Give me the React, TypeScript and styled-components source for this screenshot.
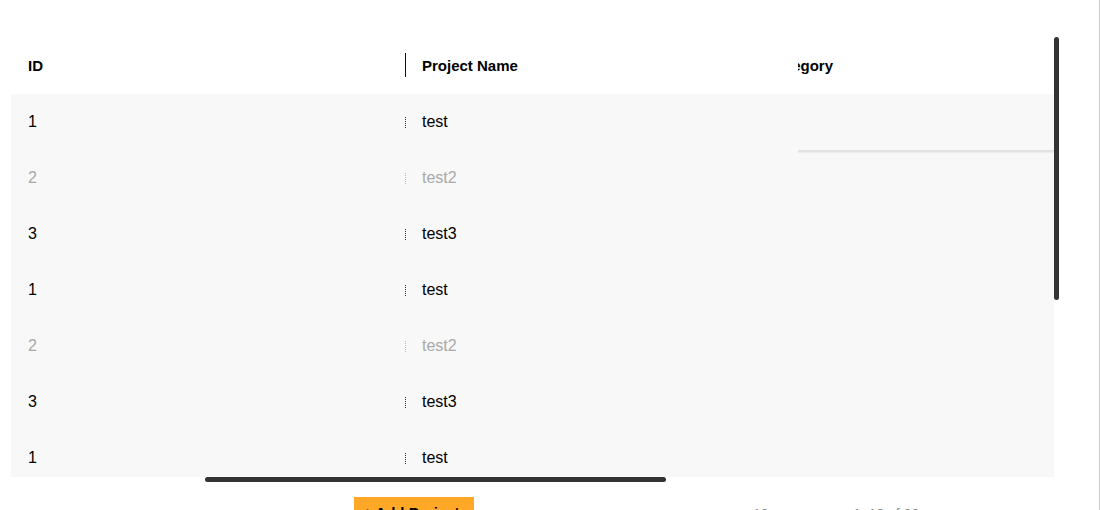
import styled, { createGlobalStyle } from 'styled-components'

type Project = { id: number; name: string; disabled?: boolean }

const ROWS: Project[] = [
  { id: 1, name: 'test' },
  { id: 2, name: 'test2', disabled: true },
  { id: 3, name: 'test3' },
  { id: 1, name: 'test' },
  { id: 2, name: 'test2', disabled: true },
  { id: 3, name: 'test3' },
  { id: 1, name: 'test' },
]

export default function App(): JSX.Element {
  return (
    <>
      <GlobalStyle />
      <Page>
        <GridFrame>
          <HeaderRow>
            <HeadCell>ID</HeadCell>
            <HeadCell $divider>Project Name</HeadCell>
            <ClippedHead>
              <span>Category</span>
            </ClippedHead>
          </HeaderRow>
          <Body>
            {ROWS.map((row, i) => (
              <Row key={i} $muted={row.disabled}>
                <Cell>{row.id}</Cell>
                <Cell $handle>{row.name}</Cell>
                <Cell $underline={i === 0} />
              </Row>
            ))}
          </Body>
          <VThumb />
          <HThumb />
        </GridFrame>
        <Footer>
          <AddButton>+ Add Project</AddButton>
          <Pager>
            <PerPage>10</PerPage>
            <Range>1–10 of 20</Range>
            <Arrow>‹</Arrow>
            <Arrow>›</Arrow>
          </Pager>
        </Footer>
      </Page>
    </>
  )
}

const GlobalStyle = createGlobalStyle`
  html, body {
    margin: 0;
    background: #fff;
    font-family: "Liberation Sans", Arial, sans-serif;
  }
`

const Page = styled.div`
  width: 1100px;
  height: 510px;
  box-sizing: border-box;
  padding: 37px 0 0 11px;
  border-right: 1px solid #c9c9c9;
  background: #fff;
  overflow: hidden;
`

const GridFrame = styled.div`
  position: relative;
  width: 1048px;
  height: 445px;
  padding-top: 1px;
  box-sizing: border-box;
  overflow: hidden;
  background: #fff;
`

const columns = '394px 393px 256px'

const HeaderRow = styled.div`
  display: grid;
  grid-template-columns: ${columns};
  height: 56px;
  padding-bottom: 2px;
  box-sizing: border-box;
  background: #fff;
`

const HeadCell = styled.div<{ $divider?: boolean }>`
  position: relative;
  display: flex;
  align-items: center;
  padding-left: 17px;
  font-size: 15px;
  font-weight: 700;
  color: #000;

  ${({ $divider }) =>
    $divider &&
    `
    &::before {
      content: '';
      position: absolute;
      left: 0;
      top: 15px;
      height: 24px;
      width: 1px;
      background: #111;
    }
  `}
`

const ClippedHead = styled.div`
  display: flex;
  align-items: center;
  overflow: hidden;
  font-size: 15px;
  font-weight: 700;
  color: #000;

  span {
    margin-left: -30px;
    white-space: nowrap;
  }
`

const Body = styled.div`
  width: 1043px;
  height: 383px;
  overflow: hidden;
  background: #f8f8f8;
`

const Row = styled.div<{ $muted?: boolean }>`
  display: grid;
  grid-template-columns: ${columns};
  height: 56px;
  font-size: 16px;
  color: ${({ $muted }) => ($muted ? '#a9a9a9' : '#000')};
`

const Cell = styled.div<{ $handle?: boolean; $underline?: boolean }>`
  position: relative;
  display: flex;
  align-items: center;
  padding-left: 17px;

  ${({ $handle }) =>
    $handle &&
    `
    &::before {
      content: '';
      position: absolute;
      left: 0;
      top: 23px;
      height: 11px;
      border-left: 1px dotted currentColor;
      opacity: 0.8;
    }
  `}

  ${({ $underline }) =>
    $underline &&
    `
    &::after {
      content: '';
      position: absolute;
      left: 0;
      right: 0;
      bottom: -2px;
      height: 2px;
      background: #e2e2e2;
      box-shadow: 0 1px 1px #ececec;
    }
  `}
`

const VThumb = styled.div`
  position: absolute;
  right: 0;
  top: 0;
  width: 5px;
  height: 263px;
  border-radius: 3px;
  background: #333;
`

const HThumb = styled.div`
  position: absolute;
  left: 194px;
  bottom: 0;
  width: 461px;
  height: 5px;
  border-radius: 3px;
  background: #333;
`

const Footer = styled.div`
  display: flex;
  align-items: flex-start;
  padding-top: 15px;
`

const AddButton = styled.button`
  flex-shrink: 0;
  margin-left: 343px;
  width: 120px;
  height: 32px;
  padding: 0 0 0 9px;
  border: none;
  background: #ffa726;
  color: #000;
  font-family: inherit;
  font-size: 15px;
  font-weight: 700;
  text-align: left;
  line-height: 30px;
`

const Pager = styled.div`
  flex-shrink: 0;
  display: flex;
  align-items: center;
  margin-left: 279px;
  padding-top: 5px;
  font-size: 14px;
  color: #888;
`

const PerPage = styled.span`
  width: 100px;
`

const Range = styled.span`
  width: 130px;
`

const Arrow = styled.span`
  width: 44px;
  font-size: 20px;
`
